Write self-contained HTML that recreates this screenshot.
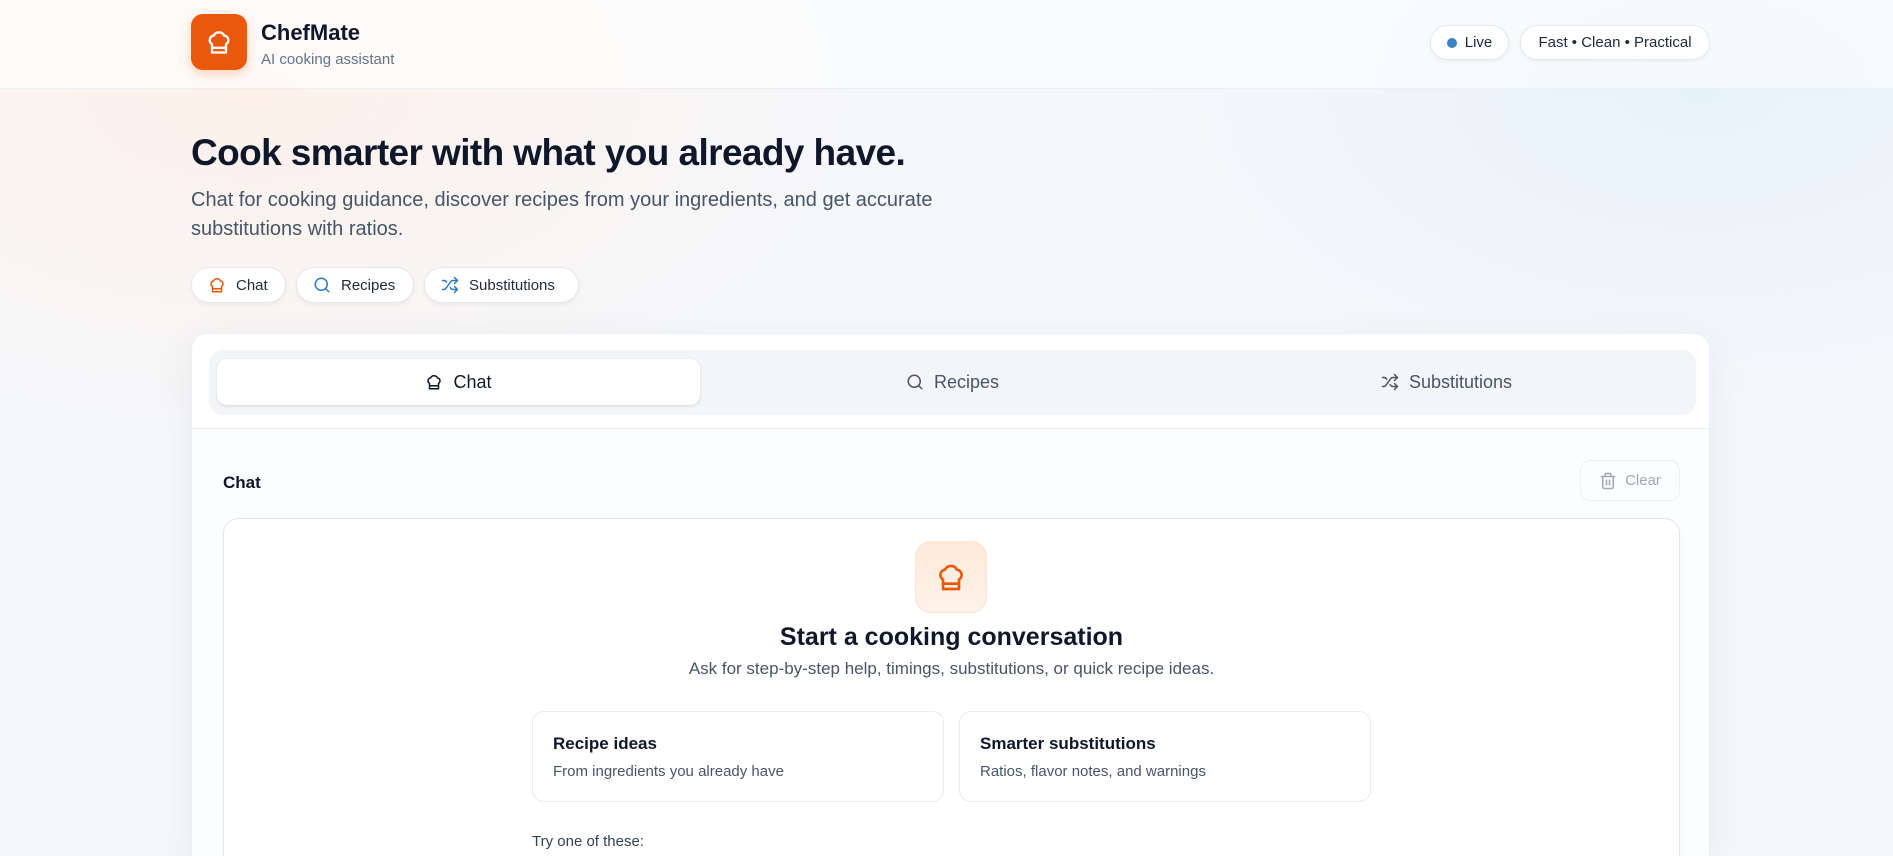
<!DOCTYPE html>
<html style="height:856px;overflow:hidden"><head><meta charset="utf-8"><style>
*{box-sizing:border-box;margin:0;padding:0}
html,body{width:1893px;height:856px;overflow:hidden}
body{font-family:"Liberation Sans",sans-serif;color:#0f172a;
background:radial-gradient(ellipse 900px 500px at 250px 90px,#fdf1ea 0%,rgba(253,241,234,0) 70%),radial-gradient(ellipse 800px 450px at 1700px 90px,#e6f2fa 0%,rgba(230,242,250,0) 70%),#f5f7fa;position:relative}
.hdr{position:absolute;left:0;top:0;width:1893px;height:89px;background:rgba(255,255,255,.6);border-bottom:1px solid #eceff3}
.logo{position:absolute;left:191px;top:14px;width:56px;height:56px;border-radius:12px;background:#ea580c;box-shadow:0 4px 10px rgba(234,88,12,.25);display:flex;align-items:center;justify-content:center}
.brand{position:absolute;left:261px;top:20px;font-size:22px;font-weight:700}
.sub{position:absolute;left:261px;top:51px;font-size:15px;color:#64748b}
.pill{position:absolute;height:35px;border-radius:18px;background:#fff;border:1px solid #e5e8ed;box-shadow:0 2px 4px rgba(0,0,0,.05);font-size:15px;color:#1e293b;display:flex;align-items:center;justify-content:center;gap:8px}
h1{position:absolute;left:191px;top:132px;font-size:37px;font-weight:700;letter-spacing:-.6px}
.lead{position:absolute;left:191px;top:186px;width:820px;font-size:20px;line-height:29px;color:#475569}
.chip{position:absolute;top:267px;height:36px;border-radius:18px;background:#fff;border:1px solid #e5e8ed;box-shadow:0 2px 4px rgba(0,0,0,.05);font-size:15px;color:#1e293b;display:flex;align-items:center;padding-left:16px;gap:10px}
.card{position:absolute;left:191px;top:333px;width:1519px;height:523px;background:#fff;border:1px solid #eceff3;border-bottom:none;border-radius:16px 16px 0 0;box-shadow:0 10px 40px rgba(15,23,42,.06);overflow:hidden}
.tabs{position:absolute;left:17px;top:16px;width:1487px;height:65px;background:#f3f5f8;border-radius:14px}
.tab{position:absolute;top:9px;height:46px;width:483px;display:flex;align-items:center;justify-content:center;gap:10px;font-size:18px;color:#475569}
.tab.act{background:#fff;border-radius:10px;box-shadow:0 1px 3px rgba(0,0,0,.12);color:#0f172a}
.div{position:absolute;left:0;top:94px;width:100%;border-top:1px solid #eceff3}
.low{position:absolute;left:0;top:95px;width:100%;height:430px;background:#fcfdfe}
.clbl{position:absolute;left:31px;top:139px;font-size:17px;font-weight:700}
.clear{position:absolute;left:1388px;top:126px;width:100px;height:41px;border:1px solid #eef0f3;border-radius:10px;display:flex;align-items:center;justify-content:center;gap:8px;color:#a0a8b5;font-size:15px}
.inner{position:absolute;left:31px;top:184px;width:1457px;height:360px;background:#fff;border:1px solid #e3e7ec;border-radius:16px;box-shadow:0 2px 6px rgba(0,0,0,.03)}
.ib{position:absolute;left:691px;top:22px;width:72px;height:72px;border-radius:16px;background:linear-gradient(#fde9d9,#fef3ea);border:1px solid #fbe3d0;display:flex;align-items:center;justify-content:center}
.t{position:absolute;left:0;width:100%;text-align:center}
.sc{position:absolute;top:192px;width:412px;height:91px;border:1px solid #e8ebef;border-radius:12px;padding:22px 20px}
.sc b{display:block;font-size:17px;font-weight:700;margin-bottom:9px}
.sc span{font-size:15px;color:#475569}
</style></head><body>
<div class="hdr"></div>
<div class="logo"><svg width="28" height="28" viewBox="0 0 24 24" fill="none" stroke="#fff" stroke-width="2" stroke-linejoin="round"><path d="M6 13.9A4 4 0 0 1 7.5 6.5a5 5 0 0 1 9 0A4 4 0 0 1 18 13.9V21H6z"/><path d="M6 17h12"/></svg></div>
<div class="brand">ChefMate</div>
<div class="sub">AI cooking assistant</div>
<div class="pill" style="left:1430px;top:25px;width:79px"><span style="width:10px;height:10px;border-radius:5px;background:#3b82c4"></span>Live</div>
<div class="pill" style="left:1520px;top:25px;width:190px">Fast • Clean • Practical</div>
<h1>Cook smarter with what you already have.</h1>
<div class="lead">Chat for cooking guidance, discover recipes from your ingredients, and get accurate substitutions with ratios.</div>
<div class="chip" style="left:191px;width:95px"><svg width="18" height="18" viewBox="0 0 24 24" fill="none" stroke="#ea580c" stroke-width="2" stroke-linejoin="round"><path d="M6 13.9A4 4 0 0 1 7.5 6.5a5 5 0 0 1 9 0A4 4 0 0 1 18 13.9V21H6z"/><path d="M6 17h12"/></svg>Chat</div>
<div class="chip" style="left:296px;width:118px"><svg width="18" height="18" viewBox="0 0 24 24" fill="none" stroke="#2b7bc4" stroke-width="2" stroke-linecap="round"><circle cx="11" cy="11" r="8"/><path d="m21 21-4.3-4.3"/></svg>Recipes</div>
<div class="chip" style="left:424px;width:155px"><svg width="18" height="18" viewBox="0 0 24 24" fill="none" stroke="#2b7bc4" stroke-width="2" stroke-linecap="round" stroke-linejoin="round"><path d="m18 14 4 4-4 4M18 2l4 4-4 4M2 18h1.4c1.3 0 2.5-.6 3.3-1.7l6.1-8.6c.7-1.1 2-1.7 3.3-1.7H22M2 6h1.9c1.5 0 2.9.9 3.6 2.2M22 18h-5.9c-1.3 0-2.6-.7-3.3-1.8l-.5-.8"/></svg>Substitutions</div>
<div class="card">
 <div class="tabs">
  <div class="tab act" style="left:8px"><svg width="18" height="18" viewBox="0 0 24 24" fill="none" stroke="#0f172a" stroke-width="2" stroke-linejoin="round"><path d="M6 13.9A4 4 0 0 1 7.5 6.5a5 5 0 0 1 9 0A4 4 0 0 1 18 13.9V21H6z"/><path d="M6 17h12"/></svg>Chat</div>
  <div class="tab" style="left:502px"><svg width="18" height="18" viewBox="0 0 24 24" fill="none" stroke="#475569" stroke-width="2" stroke-linecap="round"><circle cx="11" cy="11" r="8"/><path d="m21 21-4.3-4.3"/></svg>Recipes</div>
  <div class="tab" style="left:996px"><svg width="18" height="18" viewBox="0 0 24 24" fill="none" stroke="#475569" stroke-width="2" stroke-linecap="round" stroke-linejoin="round"><path d="m18 14 4 4-4 4M18 2l4 4-4 4M2 18h1.4c1.3 0 2.5-.6 3.3-1.7l6.1-8.6c.7-1.1 2-1.7 3.3-1.7H22M2 6h1.9c1.5 0 2.9.9 3.6 2.2M22 18h-5.9c-1.3 0-2.6-.7-3.3-1.8l-.5-.8"/></svg>Substitutions</div>
 </div>
 <div class="div"></div>
 <div class="low"></div>
 <div class="clbl">Chat</div>
 <div class="clear"><svg width="18" height="18" viewBox="0 0 24 24" fill="none" stroke="#a0a8b5" stroke-width="2" stroke-linecap="round"><path d="M3 6h18M19 6v14a2 2 0 0 1-2 2H7a2 2 0 0 1-2-2V6M8 6V4a2 2 0 0 1 2-2h4a2 2 0 0 1 2 2v2M10 11v6M14 11v6"/></svg>Clear</div>
 <div class="inner">
  <div class="ib"><svg width="32" height="32" viewBox="0 0 24 24" fill="none" stroke="#ea580c" stroke-width="2" stroke-linejoin="round"><path d="M6 13.9A4 4 0 0 1 7.5 6.5a5 5 0 0 1 9 0A4 4 0 0 1 18 13.9V21H6z"/><path d="M6 17h12"/></svg></div>
  <div class="t" style="top:104px;font-size:25px;font-weight:700">Start a cooking conversation</div>
  <div class="t" style="top:140px;font-size:17px;color:#475569">Ask for step-by-step help, timings, substitutions, or quick recipe ideas.</div>
  <div class="sc" style="left:308px"><b>Recipe ideas</b><span>From ingredients you already have</span></div>
  <div class="sc" style="left:735px"><b>Smarter substitutions</b><span>Ratios, flavor notes, and warnings</span></div>
  <div style="position:absolute;left:308px;top:314px;font-size:15px;color:#334155">Try one of these:</div>
 </div>
</div>
</body></html>
